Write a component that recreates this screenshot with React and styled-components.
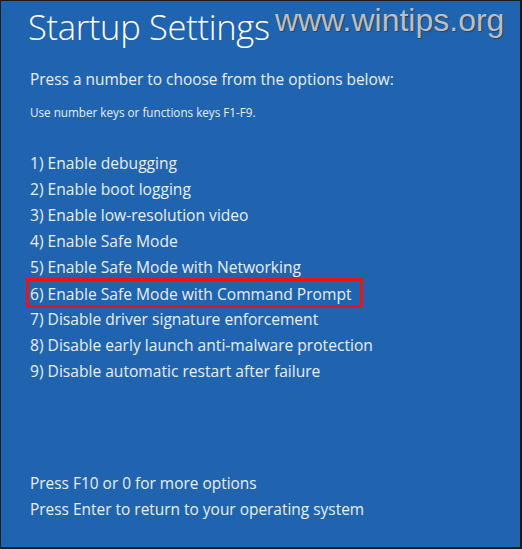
import React from "react";
import styled, { createGlobalStyle } from "styled-components";

const Global = createGlobalStyle`
  html, body { margin: 0; padding: 0; background: #fff; }
  * { box-sizing: border-box; }
`;

const Screen = styled.div`
  position: relative;
  width: 522px;
  height: 549px;
  background: #2064b0;
  border: 1px solid #1b1b1b;
  border-right-width: 2px;
  border-bottom-width: 2px;
  color: #e8eef7;
  font-family: "Open Sans", "Noto Sans", sans-serif;
  display: flex;
  flex-direction: column;
  padding: 5px 0 0 29px;
`;

const Title = styled.h1`
  margin: 0 0 0 -2px;
  font-size: 34.5px;
  font-weight: 300;
  line-height: 42px;
  color: #fff;
  letter-spacing: -0.3px;
`;

const Watermark = styled.div`
  position: absolute;
  top: 1px;
  left: 274px;
  font-family: "Liberation Sans", Arial, sans-serif;
  font-size: 32px;
  color: #b9bec7;
  text-shadow: 1px 1px 1px #3a3f4a;
`;

const Lead = styled.p`
  margin: 21px 0 0;
  font-size: 15.45px;
  line-height: 20px;
`;

const Hint = styled.p`
  margin: 15px 0 0;
  font-size: 11.7px;
  line-height: 16px;
`;

const Options = styled.ol`
  list-style: none;
  margin: 30px 0 0;
  padding: 0;
`;

const Option = styled.li`
  font-size: 15.6px;
  line-height: 26px;
  height: 26px;
  display: flex;
  align-items: center;
`;

const Selected = styled.span`
  margin-left: -4px;
  padding: 1px 8px 0 1px;
  height: 30px;
  display: flex;
  align-items: center;
  border: 3px solid #e8141c;
`;

const Footer = styled.div`
  margin-top: auto;
  margin-bottom: 25px;
  font-size: 15.45px;
  line-height: 26px;
`;

const options = [
  "1) Enable debugging",
  "2) Enable boot logging",
  "3) Enable low-resolution video",
  "4) Enable Safe Mode",
  "5) Enable Safe Mode with Networking",
  "6) Enable Safe Mode with Command Prompt",
  "7) Disable driver signature enforcement",
  "8) Disable early launch anti-malware protection",
  "9) Disable automatic restart after failure",
];

export default function App() {
  return (
    <>
      <Global />
      <Screen>
        <Title>Startup Settings</Title>
        <Watermark>www.wintips.org</Watermark>
        <Lead>Press a number to choose from the options below:</Lead>
        <Hint>Use number keys or functions keys F1-F9.</Hint>
        <Options>
          {options.map((text, i) => (
            <Option key={text}>
              {i === 5 ? <Selected>{text}</Selected> : text}
            </Option>
          ))}
        </Options>
        <Footer>
          <div>Press F10 or 0 for more options</div>
          <div>Press Enter to return to your operating system</div>
        </Footer>
      </Screen>
    </>
  );
}
